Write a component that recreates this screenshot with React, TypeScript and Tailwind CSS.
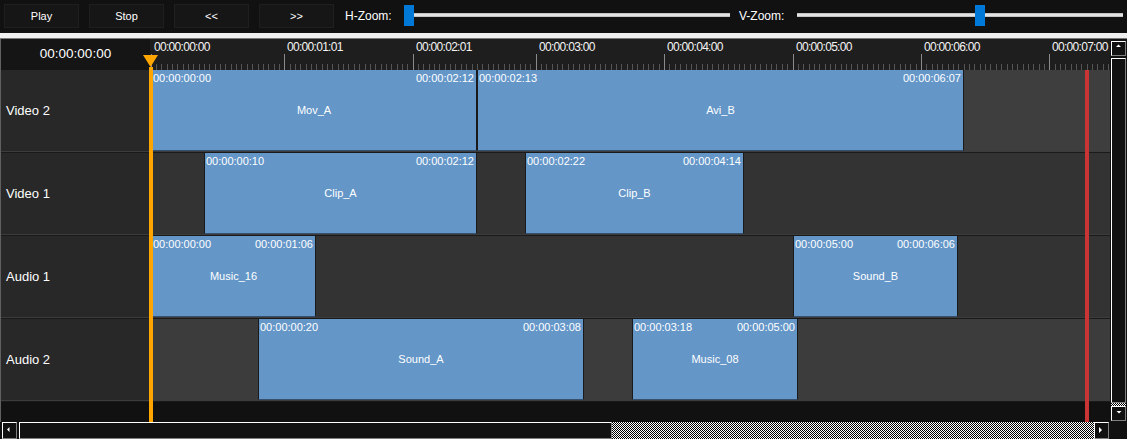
import React from "react";

const FPS = 24;
const PX_PER_SEC = 128.4;
const FRAME_PX = PX_PER_SEC / FPS;

const toSec = (tc: string) => {
  const [h, m, s, f] = tc.split(":").map(Number);
  return h * 3600 + m * 60 + s + f / FPS;
};
const xAt = (sec: number) => Math.round(0.5 + sec * PX_PER_SEC);

type Clip = { name: string; start: string; end: string };
type Track = { name: string; lane: string; clips: Clip[] };

const tracks: Track[] = [
  {
    name: "Video 2",
    lane: "bg-[#3e3e3e]",
    clips: [
      { name: "Mov_A", start: "00:00:00:00", end: "00:00:02:12" },
      { name: "Avi_B", start: "00:00:02:13", end: "00:00:06:07" },
    ],
  },
  {
    name: "Video 1",
    lane: "bg-[#333333]",
    clips: [
      { name: "Clip_A", start: "00:00:00:10", end: "00:00:02:12" },
      { name: "Clip_B", start: "00:00:02:22", end: "00:00:04:14" },
    ],
  },
  {
    name: "Audio 1",
    lane: "bg-[#333333]",
    clips: [
      { name: "Music_16", start: "00:00:00:00", end: "00:00:01:06" },
      { name: "Sound_B", start: "00:00:05:00", end: "00:00:06:06" },
    ],
  },
  {
    name: "Audio 2",
    lane: "bg-[#3c3c3c]",
    clips: [
      { name: "Sound_A", start: "00:00:00:20", end: "00:00:03:08" },
      { name: "Music_08", start: "00:00:03:18", end: "00:00:05:00" },
    ],
  },
];

const marks = [
  { f: 0, label: "00:00:00:00" },
  { f: 25, label: "00:00:01:01" },
  { f: 49, label: "00:00:02:01" },
  { f: 72, label: "00:00:03:00" },
  { f: 96, label: "00:00:04:00" },
  { f: 120, label: "00:00:05:00" },
  { f: 144, label: "00:00:06:00" },
  { f: 168, label: "00:00:07:00" },
];

const checker =
  "bg-[image:repeating-conic-gradient(#ffffff_0_25%,#000000_0_50%)] bg-[length:2px_2px]";
const bevel =
  "bg-[#111111] border border-t-white border-l-white border-r-[#808080] border-b-[#808080]";

function Slider({ handle }: { handle: string }) {
  return (
    <div className="relative mt-[5px] h-[21px] w-[326px]">
      <div className="absolute left-0 right-0 top-[8px] h-[4px] bg-[#e4e4e4] border-y border-[#c4c4c4]" />
      <div className={`absolute top-0 h-[21px] w-[10px] bg-[#0078d7] ${handle}`} />
    </div>
  );
}

function Toolbar() {
  return (
    <div className="h-[33px] shrink-0 flex items-start pl-[4px]">
      <div className="flex gap-[10px] mt-[4px]">
        {["Play", "Stop", "<<", ">>"].map((b) => (
          <button
            key={b}
            className="h-[24px] w-[75px] bg-[#161616] border border-[#1f1f1f] text-[11px] text-white"
          >
            {b}
          </button>
        ))}
      </div>
      <span className="ml-[11px] w-[59px] leading-[33px] text-[12px]">H-Zoom:</span>
      <Slider handle="left-0" />
      <span className="ml-[9px] w-[58px] leading-[33px] text-[12px]">V-Zoom:</span>
      <Slider handle="left-[178px]" />
    </div>
  );
}

function Ruler() {
  return (
    <div className="flex h-[31px] shrink-0">
      <div className="w-[149px] bg-[#151515] flex items-center justify-center text-[13.5px]">
        00:00:00:00
      </div>
      <div className="relative flex-1 bg-[#1e1e1e] overflow-hidden">
        {Array.from({ length: 180 }, (_, f) => (
          <div
            key={f}
            className="absolute top-[25px] h-[6px] w-px bg-[#555555]"
            style={{ left: Math.round(0.5 + f * FRAME_PX) }}
          />
        ))}
        {marks.map((m) => {
          const x = Math.round(0.5 + m.f * FRAME_PX);
          return (
            <React.Fragment key={m.f}>
              <div className="absolute top-[15px] h-[16px] w-px bg-[#8a8a8a]" style={{ left: x }} />
              <span
                className="absolute top-[1px] whitespace-nowrap text-[12px] leading-[14px] tracking-[-0.7px] text-[#f4f4f4]"
                style={{ left: x + 3 }}
              >
                {m.label}
              </span>
            </React.Fragment>
          );
        })}
      </div>
    </div>
  );
}

function ClipBox({ clip }: { clip: Clip }) {
  const left = xAt(toSec(clip.start));
  const right = xAt(toSec(clip.end) + 1 / FPS);
  return (
    <div
      className="absolute top-0 h-[81px] bg-[#6496c8] border-x border-x-[#1a1a1a] border-b border-b-[#34506e]"
      style={{ left, width: right - left }}
    >
      <div className="flex justify-between pl-px pr-[2px] pt-[2px] text-[11px] leading-[13px] whitespace-nowrap">
        <span>{clip.start}</span>
        <span>{clip.end}</span>
      </div>
      <div className="absolute inset-0 flex items-center justify-center text-[11px]">
        {clip.name}
      </div>
    </div>
  );
}

function TrackRow({ track }: { track: Track }) {
  return (
    <div className="h-[83px] shrink-0 flex flex-col">
      <div className="flex h-[81px]">
        <div className="w-[149px] bg-[#282828] flex items-center pl-[5px] text-[13px]">
          {track.name}
        </div>
        <div className={`relative flex-1 overflow-hidden ${track.lane}`}>
          {track.clips.map((c) => (
            <ClipBox key={c.name} clip={c} />
          ))}
        </div>
      </div>
      <div className="h-px bg-[#3c3c3c]" />
      <div className="h-px bg-[#1a1a1a]" />
    </div>
  );
}

function Arrow({ points }: { points: string }) {
  return (
    <svg width="13" height="15" viewBox="0 0 13 15" className="block">
      <polygon points={points} fill="#ffffff" />
    </svg>
  );
}

function VScroll() {
  return (
    <div className="w-[17px] bg-[#111111] flex flex-col pl-px pt-[2px]">
      <div className={`w-[15px] h-[15px] flex items-start justify-center overflow-hidden ${bevel}`}>
        <svg width="13" height="13" viewBox="0 0 13 13">
          <polygon points="4,5 9,5 6.5,2.5" fill="#ffffff" />
        </svg>
      </div>
      <div className="h-[2px]" />
      <div className={`w-[15px] h-[345px] ${bevel}`} />
      <div className={`w-[15px] h-[3px] ${checker}`} />
      <div className={`w-[15px] h-[15px] flex items-start justify-center overflow-hidden ${bevel}`}>
        <svg width="13" height="13" viewBox="0 0 13 13">
          <polygon points="4.5,4 9.5,4 7,6.5" fill="#ffffff" />
        </svg>
      </div>
    </div>
  );
}

function HScroll() {
  return (
    <div className="h-[17px] shrink-0 flex bg-[#111111]">
      <div className="w-[2px]" />
      <div className={`w-[15px] h-[17px] overflow-hidden ${bevel}`}>
        <Arrow points="6.5,4 6.5,9 4,6.5" />
      </div>
      <div className="w-[2px]" />
      <div className={`w-[593px] h-[17px] ${bevel}`} />
      <div className={`w-[482px] h-[17px] ${checker}`} />
      <div className={`w-[15px] h-[17px] overflow-hidden ${bevel}`}>
        <Arrow points="4,4 4,10 7,7" />
      </div>
      <div className="flex-1" />
    </div>
  );
}

function Timeline() {
  return (
    <div className="relative w-[1109px] flex flex-col overflow-hidden">
      <Ruler />
      {tracks.map((t) => (
        <TrackRow key={t.name} track={t} />
      ))}
      <div className="flex-1 bg-[#111111]" />

      {/* playhead */}
      <div className="absolute left-[148px] top-[28px] bottom-0 w-[4px] bg-[#ffa500]" />
      <svg className="absolute left-[142px] top-[16px]" width="15" height="12" viewBox="0 0 15 12">
        <polygon points="0,0 15,0 7.5,12" fill="#ffa500" />
      </svg>
      {/* end marker */}
      <div className="absolute left-[1084px] top-[31px] bottom-0 w-[4px] bg-[#c93434]" />
    </div>
  );
}

export default function App() {
  return (
    <div className="w-[1127px] h-[439px] overflow-hidden bg-[#111111] flex flex-col text-white font-['Liberation_Sans',Arial,sans-serif] select-none">
      <Toolbar />
      <div className="h-[5px] shrink-0 bg-[#f0f0f0]" />
      <div className="h-px shrink-0 bg-[#7a7a7a]" />
      <div className="flex h-[383px] shrink-0">
        <div className="w-px bg-[#606060]" />
        <Timeline />
        <VScroll />
      </div>
      <HScroll />
    </div>
  );
}
